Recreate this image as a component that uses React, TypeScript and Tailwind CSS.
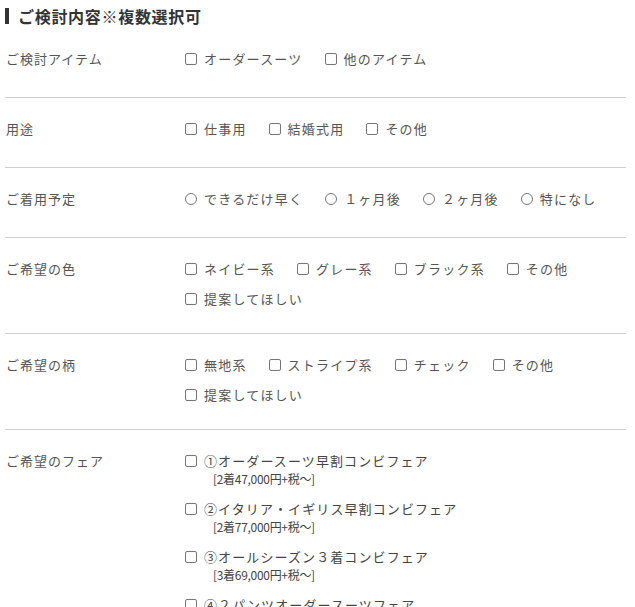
import React from "react";

type Row = {
  label: string;
  kind: "check" | "radio";
  options: string[];
};

const rows: Row[] = [
  { label: "ご検討アイテム", kind: "check", options: ["オーダースーツ", "他のアイテム"] },
  { label: "用途", kind: "check", options: ["仕事用", "結婚式用", "その他"] },
  { label: "ご着用予定", kind: "radio", options: ["できるだけ早く", "１ヶ月後", "２ヶ月後", "特になし"] },
  { label: "ご希望の色", kind: "check", options: ["ネイビー系", "グレー系", "ブラック系", "その他", "提案してほしい"] },
  { label: "ご希望の柄", kind: "check", options: ["無地系", "ストライプ系", "チェック", "その他", "提案してほしい"] },
];

const fairs = [
  { name: "①オーダースーツ早割コンビフェア", price: "[2着47,000円+税〜]" },
  { name: "②イタリア・イギリス早割コンビフェア", price: "[2着77,000円+税〜]" },
  { name: "③オールシーズン３着コンビフェア", price: "[3着69,000円+税〜]" },
  { name: "④２パンツオーダースーツフェア", price: "" },
];

const Box = ({ kind }: { kind: "check" | "radio" }) =>
  kind === "check" ? (
    <span className="inline-block w-[12px] h-[12px] border border-[#767676] rounded-[2px] bg-white shrink-0" />
  ) : (
    <span className="inline-block w-[12px] h-[12px] border border-[#767676] rounded-full bg-white shrink-0" />
  );

export default function App() {
  return (
    <div className="w-[635px] h-[607px] overflow-hidden bg-white text-[#555] font-['Noto_Sans_CJK_JP','Noto_Sans',sans-serif]">
      {/* Heading */}
      <div className="h-[28px] pl-[5px] pt-[8px] flex items-start">
        <span className="w-[4px] h-[16px] bg-[#333] mr-[9px]" />
        <h2 className="text-[16px] leading-[16px] font-bold tracking-[0.7px] text-[#333]">
          ご検討内容※複数選択可
        </h2>
      </div>

      <div className="ml-[5px] w-[621px]">
        {rows.map((row) => (
          <div
            key={row.label}
            className="grid grid-cols-[180px_1fr] pt-[19px] pb-[16px] border-b border-[#cfcfcf]"
          >
            <div className="pl-[1px] h-[24px] leading-[24px] text-[13px] tracking-[1px]">
              {row.label}
            </div>
            <div className="flex flex-wrap min-h-[34px] content-start">
              {row.options.map((opt, i) => (
                <label key={i} className="flex items-center h-[24px] mb-[6px] mr-[22px]">
                  <Box kind={row.kind} />
                  <span className="ml-[7px] text-[13px] tracking-[1.2px] leading-[24px]">{opt}</span>
                </label>
              ))}
            </div>
          </div>
        ))}

        <div className="grid grid-cols-[180px_1fr] pt-[19px] pb-[16px]">
          <div className="pl-[1px] h-[24px] leading-[24px] text-[13px] tracking-[1px]">
            ご希望のフェア
          </div>
          <div className="flex flex-col">
            {fairs.map((f) => (
              <div key={f.name} className="mb-[6px]">
                <label className="flex items-center h-[24px]">
                  <Box kind="check" />
                  <span className="ml-[7px] text-[13px] tracking-[1.1px] leading-[24px] text-[#444]">
                    {f.name}
                  </span>
                </label>
                {f.price && (
                  <div className="pl-[28px] h-[18px] leading-[12px] text-[12px] text-[#444] tracking-[-0.3px]">
                    {f.price}
                  </div>
                )}
              </div>
            ))}
          </div>
        </div>
      </div>
    </div>
  );
}
